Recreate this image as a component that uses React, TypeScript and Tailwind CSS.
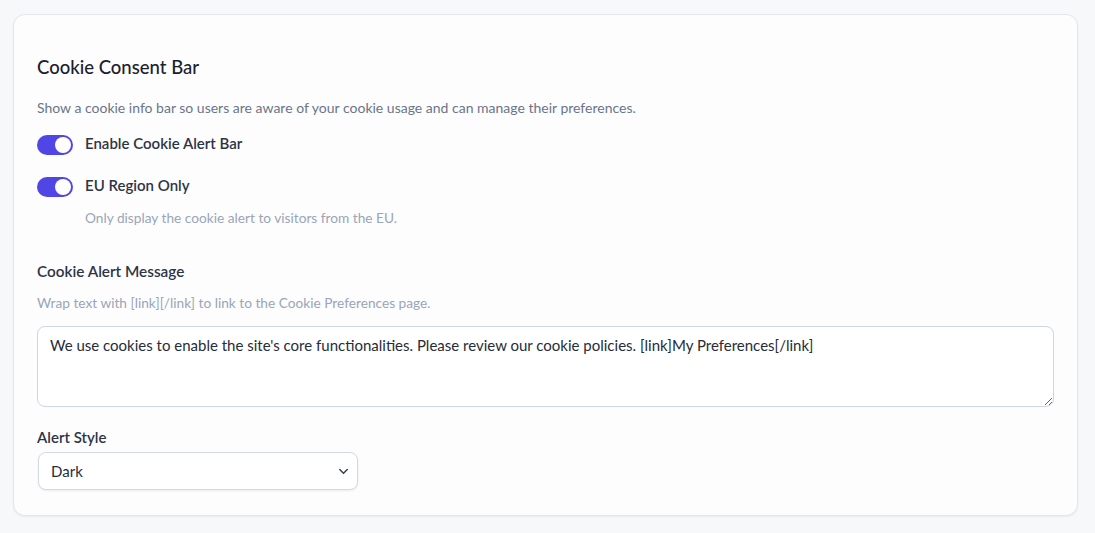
import { useState } from 'react';

function Toggle({ on, onChange }: { on: boolean; onChange: (v: boolean) => void }) {
  return (
    <button
      type="button"
      role="switch"
      aria-checked={on}
      onClick={() => onChange(!on)}
      className={`relative inline-flex h-5 w-9 shrink-0 items-center rounded-full transition ${
        on ? 'bg-[#4f46e5]' : 'bg-slate-300'
      }`}
    >
      <span
        className={`inline-block h-4 w-4 rounded-full bg-white transition ${
          on ? 'translate-x-[18px]' : 'translate-x-[2px]'
        }`}
      />
    </button>
  );
}

export default function App() {
  const [enabled, setEnabled] = useState(true);
  const [euOnly, setEuOnly] = useState(true);
  const [message, setMessage] = useState(
    "We use cookies to enable the site's core functionalities. Please review our cookie policies. [link]My Preferences[/link]",
  );
  const [style, setStyle] = useState('Dark');

  return (
    <div
      className="min-h-[533px] bg-[#f7f8fa] pl-[13px] pr-[17px] pt-[14px] pb-4"
      style={{ fontFamily: 'Lato, "Noto Sans", sans-serif' }}
    >
      <section className="rounded-xl border border-[#e3e6ec] bg-[#fdfdfe] px-[23px] pt-[42px] pb-[25px] shadow-[0_1px_2px_rgba(15,23,42,0.06)]">
        <h2 className="-mt-[2px] text-[18.5px] leading-6 font-medium text-[#1a202c]">Cookie Consent Bar</h2>
        <p className="mt-[19px] text-[14px] leading-5 text-[#6b7588]">
          Show a cookie info bar so users are aware of your cookie usage and can manage their preferences.
        </p>

        <div className="mt-[17px] flex items-center gap-3">
          <Toggle on={enabled} onChange={setEnabled} />
          <span className="-mt-1 text-[15px] font-semibold text-[#2d3446]">Enable Cookie Alert Bar</span>
        </div>

        <div className="mt-[22px] flex items-center gap-3">
          <Toggle on={euOnly} onChange={setEuOnly} />
          <span className="-mt-1 text-[15px] font-semibold text-[#2d3446]">EU Region Only</span>
        </div>
        <p className="mt-[11px] pl-12 text-[13.7px] leading-5 text-[#9aa5b8]">
          Only display the cookie alert to visitors from the EU.
        </p>

        <label htmlFor="msg" className="mt-[33px] block text-[15.3px] leading-5 font-semibold text-[#2d3446]">
          Cookie Alert Message
        </label>
        <p className="mt-3 text-[13.7px] leading-5 text-[#9aa5b8]">
          Wrap text with [link][/link] to link to the Cookie Preferences page.
        </p>
        <textarea
          id="msg"
          value={message}
          onChange={(e) => setMessage(e.target.value)}
          className="mt-[13px] block h-[81px] w-full rounded-lg border border-[#cdd6e4] bg-white px-3 py-2 text-[15px] leading-5 text-[#262c38] outline-none"
        />

        <label htmlFor="style" className="mt-[20px] block text-[15px] leading-5 font-semibold text-[#2d3446]">
          Alert Style
        </label>
        <div className="relative mt-[5px] ml-px w-[320px]">
          <select
            id="style"
            value={style}
            onChange={(e) => setStyle(e.target.value)}
            className="block h-[38px] w-full appearance-none rounded-lg border border-[#d3dae6] bg-white pl-3 pr-8 text-[15px] text-[#262c38] shadow-[0_1px_2px_rgba(15,23,42,0.08)] outline-none"
          >
            <option>Dark</option>
            <option>Light</option>
          </select>
          <svg
            className="pointer-events-none absolute right-[7px] top-1/2 h-[15px] w-[15px] -translate-y-1/2 text-[#3a4150]"
            viewBox="0 0 20 20"
            fill="none"
            stroke="currentColor"
            strokeWidth="2"
            strokeLinecap="round"
            strokeLinejoin="round"
          >
            <path d="M5 8l5 5 5-5" />
          </svg>
        </div>
      </section>
    </div>
  );
}
